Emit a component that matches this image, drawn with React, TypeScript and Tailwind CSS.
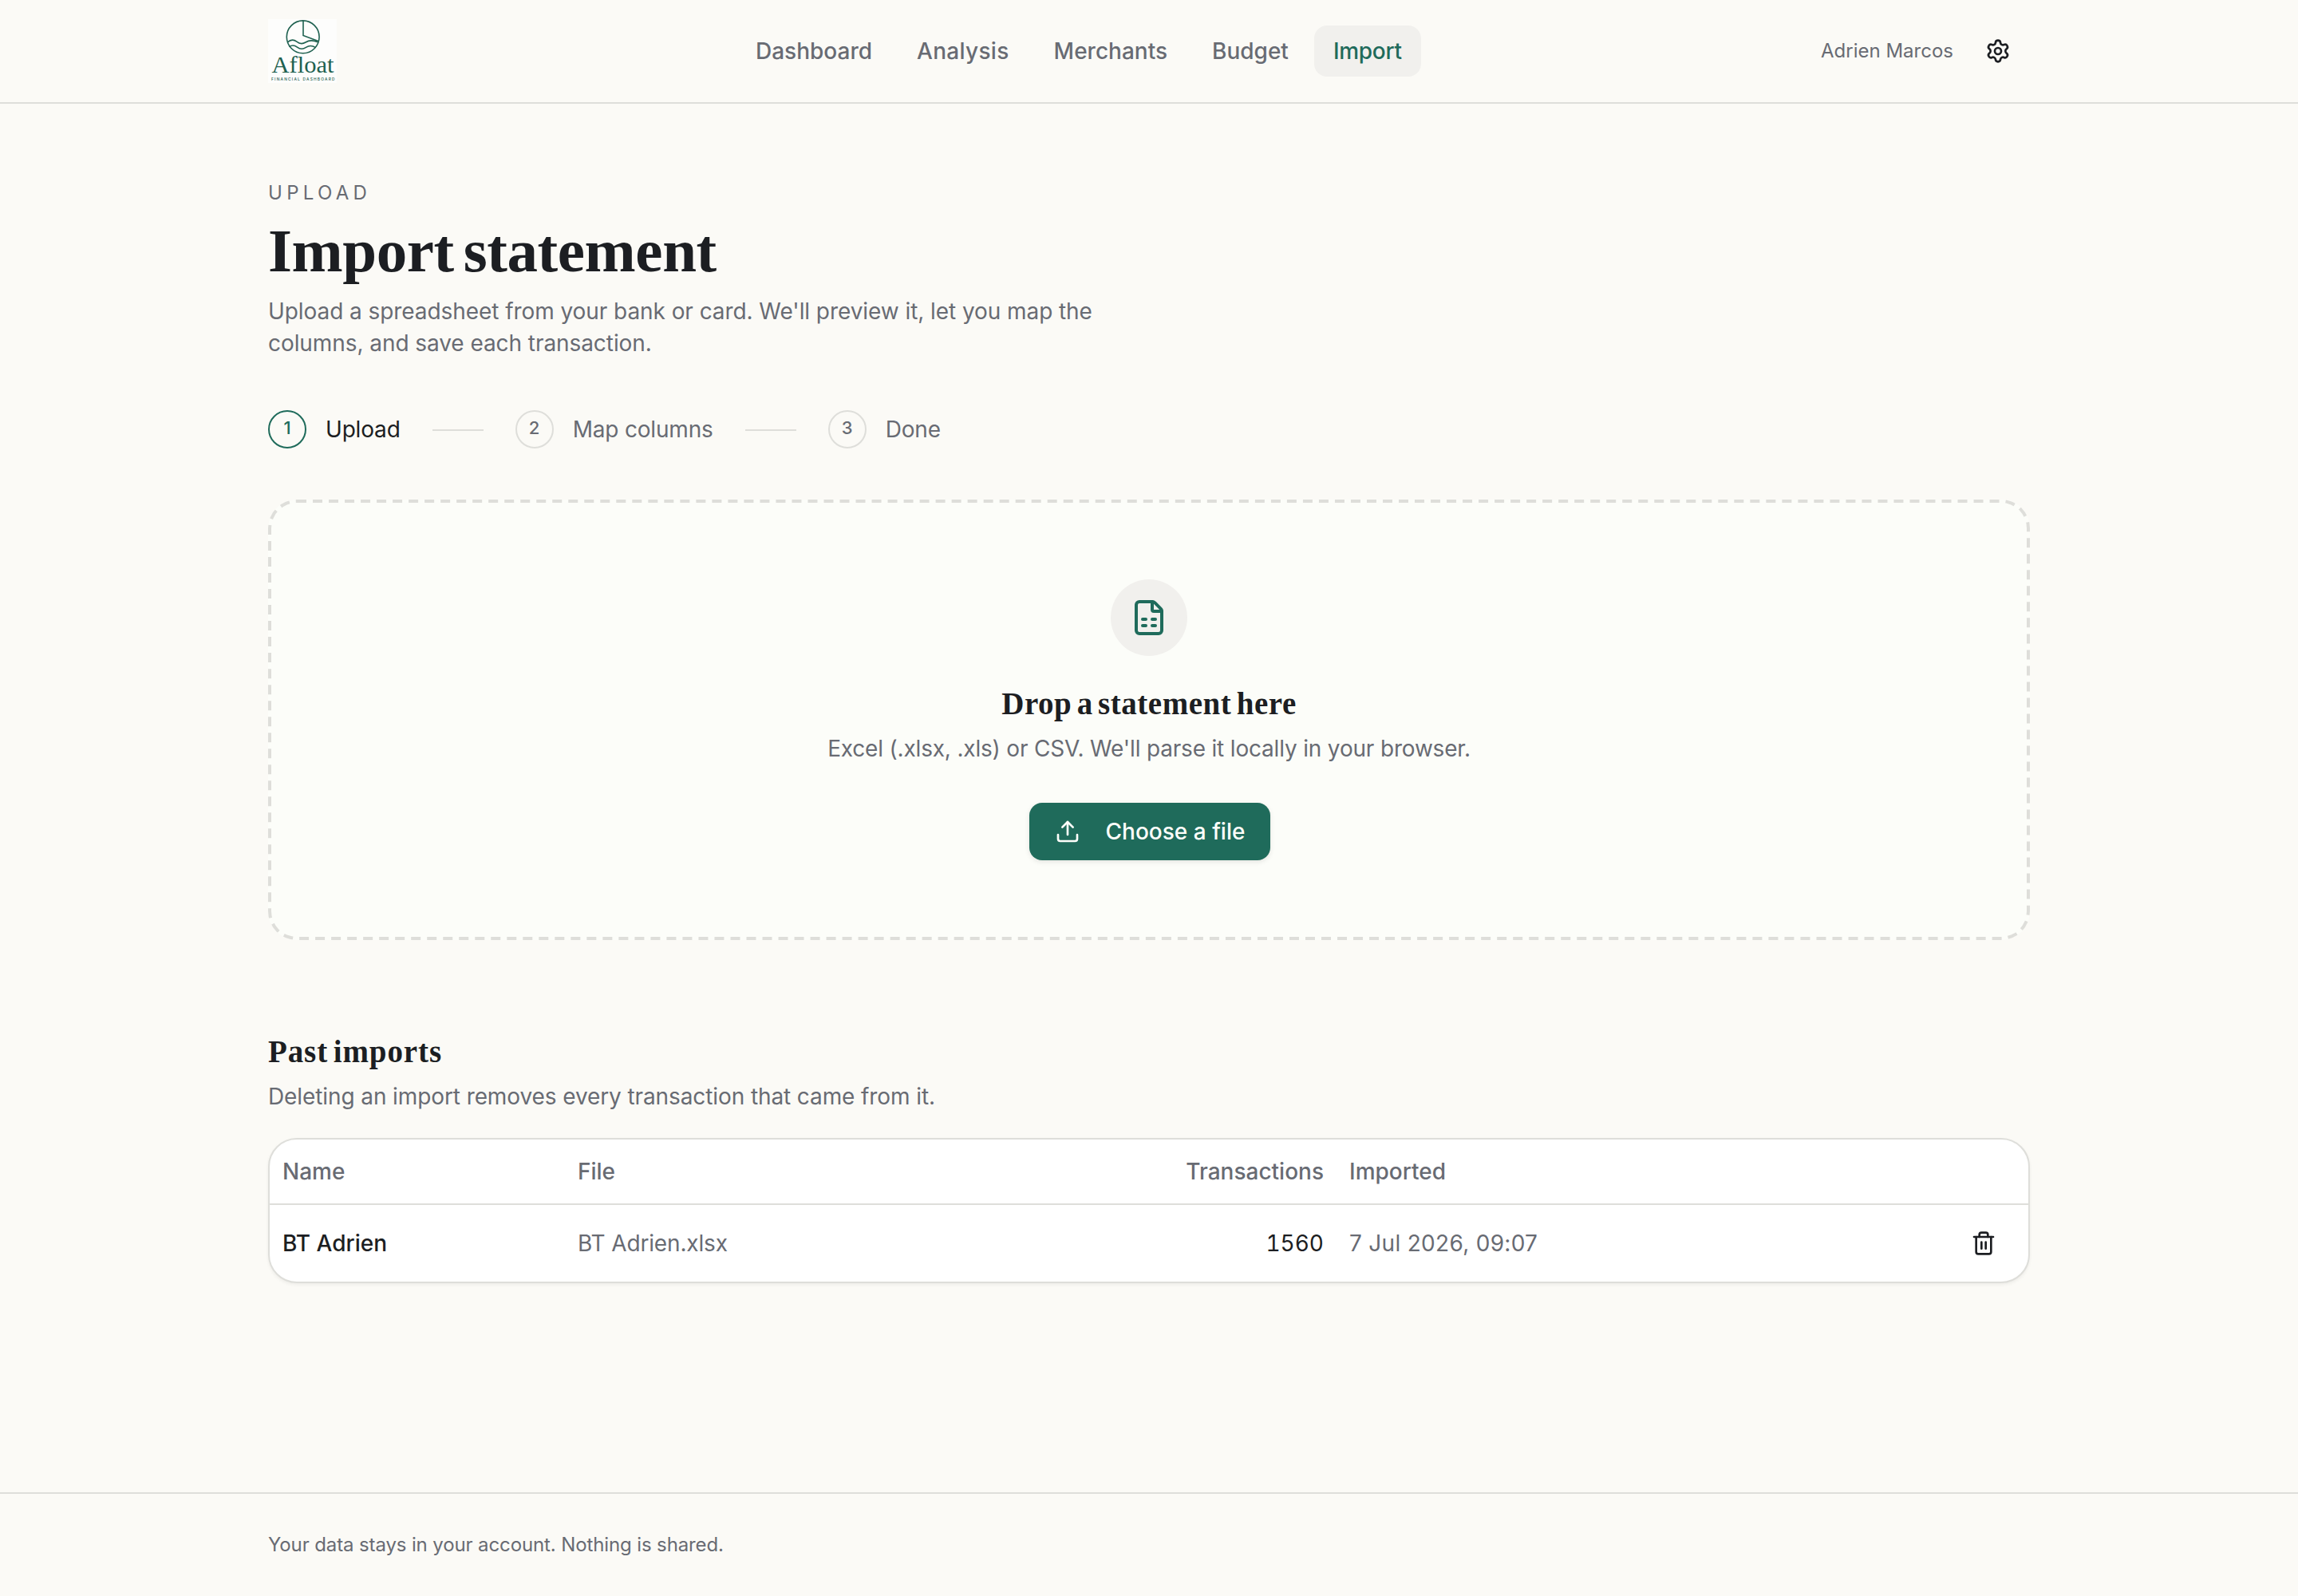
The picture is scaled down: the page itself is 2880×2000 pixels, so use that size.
import React from 'react';
import { FileSpreadsheet, Settings, Trash2, Upload } from 'lucide-react';
import clsx from 'clsx';

const navItems = [
  { label: 'Dashboard' },
  { label: 'Analysis', tracking: 'tracking-[0.3px]' },
  { label: 'Merchants' },
  { label: 'Budget' },
  { label: 'Import', tracking: 'tracking-[-0.3px]', active: true },
];
const steps = ['Upload', 'Map columns', 'Done'];

const Logo = () => (
  <svg width="86" height="80" viewBox="0 0 86 80" className="block">
    <rect width="86" height="80" fill="#fdfdfc" />
    <g fill="none" stroke="#1f6150" strokeWidth="1.6">
      <circle cx="43.7" cy="22.3" r="20.4" />
      <path d="M44 2v18.5l18.8 7" />
      <path d="M24.4 29c4-3.8 7.6-3.8 11.4-.8s7.4 3.2 11.2.8 9-3 15.400-.2" />
      <path d="M26.5 34.6c3.6-2.6 6.5-2.2 10 .5s7.4 2.7 11 .3 7.4-2.7 12 .2" />
    </g>
    <text
      x="4.5"
      y="66.7"
      fontSize="30"
      textLength="78"
      lengthAdjust="spacingAndGlyphs"
      fill="#1f6150"
      className="font-['Liberation_Serif',serif]"
    >
      Afloat
    </text>
    <text x="4" y="77" fontSize="4.8" textLength="79.5" fill="#1f6150" className="font-['Inter',sans-serif] font-medium">
      FINANCIAL DASHBOARD
    </text>
  </svg>
);

const Header = () => (
  <header className="border-b-2 border-[#dededa]">
    <div className="mx-auto flex h-32 w-[2208px] items-center justify-between">
      <div className="w-[587px]">
        <Logo />
      </div>
      <nav className="flex items-center gap-2 font-medium">
        {navItems.map((item) => (
          <a
            key={item.label}
            className={clsx(
              'flex h-16 items-center rounded-[16px] px-6',
              item.tracking,
              item.active ? 'bg-[#f1f0ed] text-[#1f6b5b]' : 'text-[#686b73]'
            )}
          >
            {item.label}
          </a>
        ))}
      </nav>
      <div className="flex flex-1 items-center justify-end gap-4">
        <span className="text-2xl text-[#686b73]">Adrien Marcos</span>
        <button className="flex size-20 items-center justify-center">
          <Settings className="size-8" />
        </button>
      </div>
    </div>
  </header>
);

const Steps = () => (
  <ol className="mt-16 flex h-12 items-center gap-10">
    {steps.map((step, i) => (
      <li key={step} className="flex items-center gap-10">
        <div className={clsx('flex items-center gap-6', i > 0 && 'text-[#686b73]')}>
          <span
            className={clsx(
              'flex size-12 items-center justify-center rounded-full border-2 pb-1 text-[22px] leading-none font-medium',
              i === 0 ? 'border-[#1f6b5b] text-[#1f6b5b]' : 'border-[#dededa]'
            )}
          >
            {i + 1}
          </span>
          <span className="tracking-[-0.18px]">{step}</span>
        </div>
        {i < steps.length - 1 && <span className="mt-0.5 h-0.5 w-16 bg-[#dededa]" />}
      </li>
    ))}
  </ol>
);

const DropZone = () => (
  <section className="relative mt-16 flex flex-col items-center rounded-[36px] bg-[#fcfdf9] py-[100px]">
    {/* outline drawn at half size and scaled up, for longer dashes */}
    <div className="pointer-events-none absolute top-0 left-0 h-1/2 w-1/2 origin-top-left scale-200 rounded-[18px] border-2 border-dashed border-[#dededa]" />
    <div className="flex size-24 items-center justify-center rounded-full bg-[#f1f0ed] text-[#1f6b5b]">
      <FileSpreadsheet className="size-12" />
    </div>
    <h2 className="mt-8 font-['Liberation_Serif',serif] text-[39px] leading-[56px] font-bold tracking-[0.55px] [word-spacing:-4px]">
      Drop a statement here
    </h2>
    <p className="mt-2 tracking-[-0.18px] text-[#686b73]">
      Excel (.xlsx, .xls) or CSV. We'll parse it locally in your browser.
    </p>
    <button className="mt-12 ml-0.5 flex h-[72px] items-center gap-8 rounded-[16px] bg-[#1f6b5b] px-8 font-medium text-[#fdfefa] shadow-[0_2px_6px_rgba(0,0,0,0.1)]">
      <Upload className="size-8" />
      Choose a file
    </button>
  </section>
);

const PastImports = () => (
  <section className="mt-28">
    <h2 className="font-['Liberation_Serif',serif] text-[39px] leading-[56px] font-bold tracking-[0.9px] [word-spacing:-4px]">
      Past imports
    </h2>
    <p className="mt-2 tracking-[-0.1px] text-[#686b73]">
      Deleting an import removes every transaction that came from it.
    </p>
    <div className="mt-8 overflow-hidden rounded-[36px] border-2 border-[#dededa] bg-white shadow-[0_2px_4px_rgba(0,0,0,0.06)]">
      <table className="w-full table-fixed border-separate border-spacing-0 text-left">
        <colgroup>
          <col className="w-[370px]" />
          <col className="w-[610px]" />
          <col className="w-[357px]" />
          <col className="w-[600px]" />
          <col />
        </colgroup>
        <thead className="text-[#686b73]">
          <tr className="h-[82px] *:border-b-2 *:border-[#dededa]">
            <th className="px-4 font-medium">Name</th>
            <th className="px-4 font-medium">File</th>
            <th className="px-4 text-right font-medium">Transactions</th>
            <th className="px-4 font-medium">Imported</th>
            <th />
          </tr>
        </thead>
        <tbody>
          <tr className="h-24 text-[#686b73]">
            <td className="px-4 font-medium text-[#1c1e22]">BT Adrien</td>
            <td className="px-4 tracking-[-0.15px]">BT Adrien.xlsx</td>
            <td className="px-4 text-right text-[#1c1e22] tabular-nums">1560</td>
            <td className="px-4 tracking-[0.3px]">7 Jul 2026, 09:07</td>
            <td className="px-4">
              <button className="ml-auto flex size-20 items-center justify-center text-[#1c1e22]">
                <Trash2 className="size-8" />
              </button>
            </td>
          </tr>
        </tbody>
      </table>
    </div>
  </section>
);

const App = () => {
  return (
    <div className="flex min-h-[2000px] flex-col bg-[#fbfaf6] font-['Inter',sans-serif] text-[28px] leading-10 text-[#1c1e22] antialiased [font-variation-settings:'opsz'_14]">
      <Header />
      <main className="mx-auto w-[2208px] flex-1 pt-24">
        <p className="text-2xl tracking-[0.22em] text-[#686b73]">UPLOAD</p>
        <h1 className="mt-4 font-['Liberation_Serif',serif] text-[77px] leading-[80px] font-bold tracking-[-0.4px] [word-spacing:-7px]">
          Import statement
        </h1>
        <p className="mt-4 w-[1100px] tracking-[-0.07px] text-[#686b73]">
          Upload a spreadsheet from your bank or card. We'll preview it, let you map the columns, and save each transaction.
        </p>
        <Steps />
        <DropZone />
        <PastImports />
      </main>
      <footer className="border-t-2 border-[#dededa] py-12">
        <p className="mx-auto w-[2208px] text-2xl tracking-[-0.12px] text-[#686b73]">
          Your data stays in your account. Nothing is shared.
        </p>
      </footer>
    </div>
  );
};

export default App;
